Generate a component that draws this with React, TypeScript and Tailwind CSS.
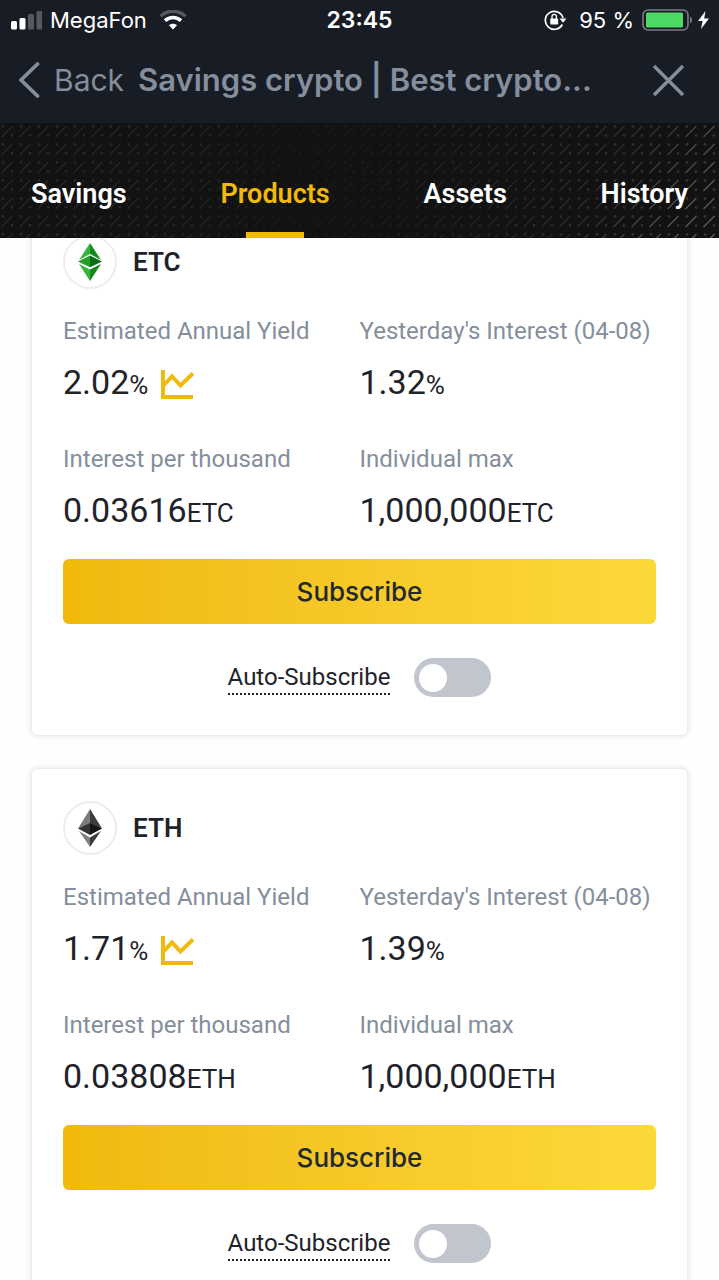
import { useState } from "react";

type Product = {
  symbol: string;
  annualYield: string;
  yesterday: string;
  perThousand: string;
  max: string;
};

const products: Product[] = [
  { symbol: "ETC", annualYield: "2.02", yesterday: "1.32", perThousand: "0.03616", max: "1,000,000" },
  { symbol: "ETH", annualYield: "1.71", yesterday: "1.39", perThousand: "0.03808", max: "1,000,000" },
];

const tabs = ["Savings", "Products", "Assets", "History"];

function StatusBar() {
  return (
    <div className="grid h-10 grid-cols-[1fr_auto_1fr] items-center px-[10px] text-white">
      <div className="flex items-center gap-2">
        <svg width="32" height="20" viewBox="0 0 32 20" aria-hidden="true">
          <rect x="1" y="11" width="6" height="8.500" rx="1.500" fill="#fff" />
          <rect x="9.500" y="8" width="6" height="11.500" rx="1.500" fill="#fff" />
          <rect x="18" y="4" width="6" height="15.500" rx="1.500" fill="#55585f" />
          <rect x="26.500" y="1" width="6" height="18.500" rx="1.500" fill="#55585f" />
        </svg>
        <span className="text-[22px] leading-7">MegaFon</span>
        <svg className="ml-1" width="28" height="20" viewBox="0 0 28 20" fill="none" aria-hidden="true">
          <path d="M1.500 6.300C8.500-.5 19.500-.5 26.500 6.300" stroke="#55585f" strokeWidth="3.400" />
          <path d="M6 10.600c4.600-4.200 11.400-4.200 16 0" stroke="#fff" strokeWidth="3.600" />
          <path d="M14 19.500l-4-4.300c2.300-2 5.700-2 8 0z" fill="#fff" />
        </svg>
      </div>
      <span className="text-[23px] leading-7 font-semibold">23:45</span>
      <div className="flex items-center justify-end gap-1">
        <svg className="mr-2" width="23" height="22" viewBox="0 0 23 22" fill="none" aria-hidden="true">
          <path d="M18.300 15.500A9 9 0 1 1 19 9" stroke="#fff" strokeWidth="1.700" />
          <path d="M15.500 9.500h7l-3.500 4.200z" fill="#fff" />
          <rect x="6.300" y="9.500" width="7.800" height="6" rx=".8" fill="#fff" />
          <path d="M8 10V7.500a2.200 2.200 0 0 1 4.400 0V10" stroke="#fff" strokeWidth="1.300" />
        </svg>
        <span className="text-[22px] leading-7">95 %</span>
        <svg className="ml-1" width="52" height="22" viewBox="0 0 52 22" fill="none" aria-hidden="true">
          <rect x="1" y="1" width="45" height="20" rx="5" stroke="#7b7d82" strokeWidth="1.600" />
          <rect x="4" y="3.500" width="37" height="15" rx="1.500" fill="#4cd964" />
          <path d="M48 7.500c2.700 1 2.700 6 0 7z" fill="#7b7d82" />
        </svg>
        <svg width="11" height="18" viewBox="0 0 11 18" aria-hidden="true">
          <path d="M7.500 0L0 10h4.600L3 18l8-10.500H6.200z" fill="#fff" />
        </svg>
      </div>
    </div>
  );
}

function TitleBar() {
  return (
    <div className="flex h-[83px] items-start pt-5 pr-8 pl-[18px] text-[#848e9c]">
      <a href="#back" className="flex shrink-0 items-center gap-[14px] text-[30px] leading-10">
        <svg width="22" height="36" viewBox="0 0 22 36" fill="none" aria-hidden="true">
          <path d="M19.500 2L3 18l16.500 16" stroke="currentColor" strokeWidth="3.800" strokeLinecap="round" strokeLinejoin="round" />
        </svg>
        Back
      </a>
      <h1 className="ml-[14px] min-w-0 flex-1 text-[31px] leading-10 font-semibold whitespace-nowrap">
        Savings crypto | Best crypto...
      </h1>
      <button type="button" aria-label="Close" className="flex h-10 shrink-0 items-center">
        <svg width="36" height="36" viewBox="0 0 36 36" fill="none" aria-hidden="true">
          <path d="M3 4l29 29M32 4L3 33" stroke="currentColor" strokeWidth="3.400" />
        </svg>
      </button>
    </div>
  );
}

function TabPattern() {
  return (
    <svg className="absolute inset-0 h-full w-full" aria-hidden="true">
      <defs>
        <pattern id="weave" width="18" height="18" patternUnits="userSpaceOnUse">
          <path d="M1.500 14L12.500 3" stroke="#fff" strokeWidth="1.200" />
          <circle cx="3" cy="3.500" r="1.400" fill="#fff" />
          <circle cx="12" cy="12.500" r="1.400" fill="#fff" />
        </pattern>
        <pattern id="slashes" width="18" height="18" patternUnits="userSpaceOnUse">
          <path d="M1.500 14L12.500 3" stroke="#fff" strokeWidth="1.200" />
        </pattern>
        <linearGradient id="fade" x1="0" y1="0" x2="1" y2="0">
          <stop offset="0" stopColor="#fff" stopOpacity=".1" />
          <stop offset=".25" stopColor="#fff" stopOpacity=".08" />
          <stop offset=".4" stopColor="#fff" stopOpacity=".03" />
          <stop offset=".52" stopColor="#fff" stopOpacity=".04" />
          <stop offset=".75" stopColor="#fff" stopOpacity=".1" />
          <stop offset="1" stopColor="#fff" stopOpacity=".14" />
        </linearGradient>
        <linearGradient id="glow" gradientUnits="userSpaceOnUse" x1="620" y1="40" x2="690" y2="90">
          <stop offset="0" stopColor="#fff" stopOpacity="0" />
          <stop offset="1" stopColor="#fff" stopOpacity=".2" />
        </linearGradient>
        <mask id="fadeMask">
          <rect width="100%" height="100%" fill="url(#fade)" />
        </mask>
        <mask id="glowMask">
          <rect width="100%" height="100%" fill="url(#glow)" />
        </mask>
      </defs>
      <rect width="100%" height="100%" fill="url(#weave)" mask="url(#fadeMask)" />
      <rect width="100%" height="100%" fill="url(#slashes)" mask="url(#glowMask)" />
    </svg>
  );
}

function Tabs() {
  const [active, setActive] = useState("Products");
  return (
    <nav className="relative h-[115px] bg-[#121212] font-[Roboto,sans-serif]">
      <TabPattern />
      <div className="relative flex h-full justify-between px-[31px]">
        {tabs.map((tab) => (
          <button
            key={tab}
            type="button"
            onClick={() => setActive(tab)}
            className={
              tab === active
                ? "flex flex-col items-center justify-between pt-[55px] text-[27px] leading-8 font-semibold text-[#f0b90b]"
                : "flex flex-col items-center justify-between pt-[55px] text-[27px] leading-8 font-semibold text-white"
            }
          >
            {tab}
            {tab === active && <span className="h-1.5 w-[58px] bg-[#f0b90b]" />}
          </button>
        ))}
      </div>
    </nav>
  );
}

function CoinIcon({ symbol }: { symbol: string }) {
  return (
    <span className="flex size-[54px] items-center justify-center rounded-full border-2 border-[#ededf0]">
      {symbol === "ETC" ? (
        <svg width="24" height="38" viewBox="0 0 24 38" aria-hidden="true">
          <path d="M12 0v11L1 17z" fill="#35b53c" />
          <path d="M12 0v11l11 6z" fill="#158a1c" />
          <path d="M12 12.500v11.700L0 18.500z" fill="#239f2a" />
          <path d="M12 12.500v11.700l12-5.700z" fill="#0b6b12" />
          <path d="M1 21l11 5.500V38z" fill="#35b53c" />
          <path d="M23 21l-11 5.500V38z" fill="#158a1c" />
        </svg>
      ) : (
        <svg width="24" height="38" viewBox="0 0 24 38" aria-hidden="true">
          <path d="M12 0v14.500L0 19.500z" fill="#7b7b7b" />
          <path d="M12 0v14.500l12 5z" fill="#3c3c3b" />
          <path d="M12 14v12L0 19.500z" fill="#343434" />
          <path d="M12 14v12l12-6.500z" fill="#141414" />
          <path d="M1 22l11 6.500V38z" fill="#808080" />
          <path d="M23 22l-11 6.500V38z" fill="#3c3c3b" />
        </svg>
      )}
    </span>
  );
}

function ChartIcon() {
  return (
    <svg className="mt-1" width="34" height="30" viewBox="0 0 34 30" fill="none" aria-hidden="true">
      <path d="M3 0v27h30" stroke="#f0b90b" strokeWidth="4" />
      <path d="M4 15l8-8.500L20.500 15.500 33 3.500" stroke="#f0b90b" strokeWidth="4" />
    </svg>
  );
}

function Stat({ label, value, unit, chart }: { label: string; value: string; unit: string; chart?: boolean }) {
  return (
    <div>
      <dt className="text-[24px] leading-8 whitespace-nowrap text-[#848e9c]">{label}</dt>
      <dd className="mt-[14px] flex h-11 items-center gap-3 text-[#1e2329]">
        <span className="text-[34px] leading-[44px]">
          {value}
          <span className="text-[26px]">{unit}</span>
        </span>
        {chart && <ChartIcon />}
      </dd>
    </div>
  );
}

function ProductCard({ product }: { product: Product }) {
  const [auto, setAuto] = useState(false);
  const id = `auto-${product.symbol}`;
  return (
    <article className="rounded-md border border-[#eaecef] bg-white px-[31px] pt-8 pb-[38px] font-[Roboto,sans-serif] shadow-[0_0_6px_rgba(20,21,26,0.1)]">
      <h2 className="flex items-center gap-4 text-[26px] leading-8 font-semibold text-[#1e2329]">
        <CoinIcon symbol={product.symbol} />
        {product.symbol}
      </h2>
      <dl className="mt-[26px] grid grid-cols-2 gap-y-[38px]">
        <Stat label="Estimated Annual Yield" value={product.annualYield} unit="%" chart />
        <Stat label="Yesterday's Interest (04-08)" value={product.yesterday} unit="%" />
        <Stat label="Interest per thousand" value={product.perThousand} unit={product.symbol} />
        <Stat label="Individual max" value={product.max} unit={product.symbol} />
      </dl>
      <button
        type="button"
        className="mt-[26px] h-[65px] w-full rounded-md bg-linear-to-r from-[#f0b90b] to-[#fcd93a] font-[Inter,sans-serif] text-[26px] font-medium text-[#212833]"
      >
        Subscribe
      </button>
      <div className="mt-[34px] flex items-center justify-center gap-6">
        <label htmlFor={id} className="border-b-2 border-dotted border-[#1e2329] text-[24px] leading-8 text-[#1e2329]">
          Auto-Subscribe
        </label>
        <input
          id={id}
          type="checkbox"
          role="switch"
          checked={auto}
          onChange={(e) => setAuto(e.target.checked)}
          className="flex h-[39px] w-[77px] appearance-none items-center rounded-full bg-[#c1c5cd] px-[5px] before:size-7 before:rounded-full before:bg-white checked:justify-end checked:bg-[#f0b90b]"
        />
      </div>
    </article>
  );
}

export default function App() {
  return (
    <div className="flex h-screen flex-col overflow-hidden bg-[#fefefe] font-[Inter,sans-serif]">
      <header className="relative z-10 shrink-0 bg-[#181c25]">
        <StatusBar />
        <TitleBar />
        <Tabs />
      </header>
      <main className="-mt-9 flex min-h-0 flex-1 flex-col overflow-y-auto px-[31px] [scrollbar-width:none]">
        <div className="flex flex-col gap-8">
          {products.map((product) => (
            <ProductCard key={product.symbol} product={product} />
          ))}
        </div>
      </main>
    </div>
  );
}
